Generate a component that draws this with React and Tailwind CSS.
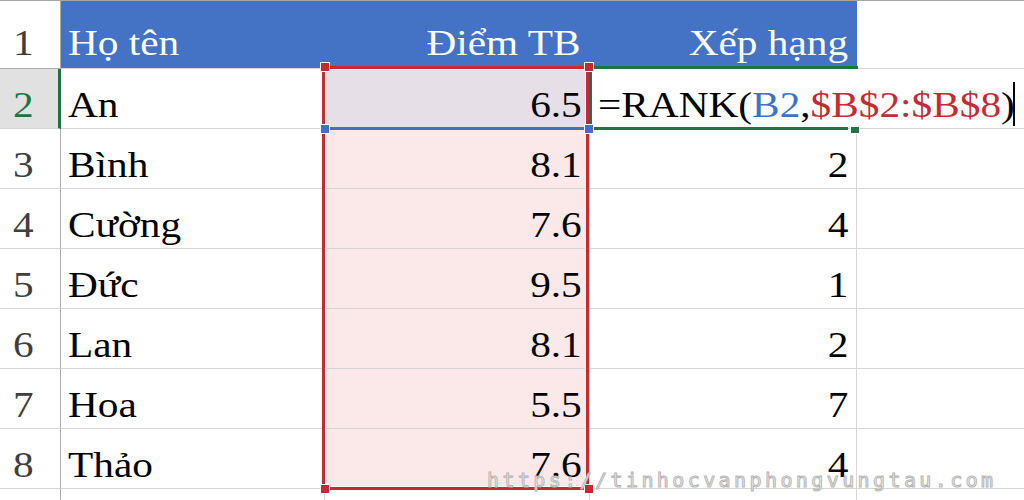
import React from "react";

const rows = [
  { n: 2, name: "An", score: "6.5", rank: "" },
  { n: 3, name: "Bình", score: "8.1", rank: "2" },
  { n: 4, name: "Cường", score: "7.6", rank: "4" },
  { n: 5, name: "Đức", score: "9.5", rank: "1" },
  { n: 6, name: "Lan", score: "8.1", rank: "2" },
  { n: 7, name: "Hoa", score: "5.5", rank: "7" },
  { n: 8, name: "Thảo", score: "7.6", rank: "4" },
];

// text in the shot is stretched a bit horizontally
function L({ children, className = "" }) {
  return <span className={"inline-block origin-left scale-x-[1.18] " + className}>{children}</span>;
}
function R({ children, className = "" }) {
  return <span className={"inline-block origin-right scale-x-[1.18] " + className}>{children}</span>;
}

function Handle({ className }) {
  return <div className={"absolute w-[10px] h-[10px] border border-white " + className} />;
}

export default function App() {
  return (
    <div
      className="relative w-[1024px] h-[500px] overflow-hidden bg-white text-[35px] leading-[35px] text-black"
      style={{ fontFamily: '"Liberation Serif", "Times New Roman", serif' }}
    >
      {/* header row */}
      <div className="flex h-[69px] border-t border-[#a6a6a6]">
        <div className="w-[61px] shrink-0 border-r border-b border-[#ababab] flex items-end pb-[7px] pl-[13px] text-[#3f3f3f]">
          <L>1</L>
        </div>
        <div className="w-[264px] shrink-0 bg-[#4472c4] border-b border-[#d4d4d4] flex items-end pb-[7px] pl-[7px] text-white">
          <L>Họ tên</L>
        </div>
        <div className="w-[265px] shrink-0 bg-[#4472c4] border-b border-[#d4d4d4] flex items-end justify-end pb-[7px] pr-[9px] text-white">
          <R>Điểm TB</R>
        </div>
        <div className="w-[267px] shrink-0 bg-[#4472c4] border-b border-[#d4d4d4] flex items-end justify-end pb-[7px] pr-[9px] text-white">
          <R>Xếp hạng</R>
        </div>
        <div className="flex-1 border-b border-[#d4d4d4]" />
      </div>

      {rows.map((r) => {
        const active = r.n === 2;
        return (
          <div key={r.n} className="flex h-[60px]">
            <div
              className={
                "w-[61px] shrink-0 border-b border-[#d4d4d4] flex items-end pb-[5px] pl-[13px] " +
                (active
                  ? "bg-[#e1e1e1] border-r-[3px] border-r-[#217346] text-[#217346]"
                  : "border-r border-r-[#ababab] text-[#3f3f3f]")
              }
            >
              <L>{r.n}</L>
            </div>
            <div className="w-[264px] shrink-0 border-r border-b border-[#d4d4d4] flex items-end pb-[5px] pl-[7px]">
              <L>{r.name}</L>
            </div>
            <div
              className={
                "w-[265px] shrink-0 border-r border-b border-[#d4d4d4] flex items-end justify-end pb-[5px] pr-[7px] " +
                (active ? "bg-[#e6dfe7]" : "bg-[#fbe9ea]")
              }
            >
              <R>{r.score}</R>
            </div>
            <div className="w-[267px] shrink-0 border-r border-b border-[#d4d4d4] flex items-end justify-end pb-[5px] pr-[8px]">
              <R>{r.rank}</R>
            </div>
            <div className="flex-1 border-b border-[#d4d4d4]" />
          </div>
        );
      })}

      <div className="flex h-[20px]">
        <div className="w-[61px] shrink-0 border-r border-[#ababab]" />
        <div className="w-[264px] shrink-0 border-r border-[#d4d4d4]" />
        <div className="w-[265px] shrink-0 border-r border-[#d4d4d4]" />
        <div className="w-[267px] shrink-0 border-r border-[#d4d4d4]" />
      </div>

      {/* cell editor on C2 */}
      <div className="absolute left-[591px] top-[69px] w-[433px] h-[59px] bg-white flex items-end pb-[5px] pl-[7px] whitespace-nowrap">
        <L>
          =RANK(<span className="text-[#3e72c6]">B2</span>,<span className="text-[#c42b35]">$B$2:$B$8</span>)
        </L>
      </div>
      <div className="absolute left-[1013px] top-[82px] w-[2px] h-[44px] bg-black" />

      {/* green active cell lines */}
      <div className="absolute left-[589px] top-[66px] w-[269px] h-[3px] bg-[#217346]" />
      <div className="absolute left-[589px] top-[66px] w-[3px] h-[64px] bg-[#217346]" />
      <div className="absolute left-[589px] top-[127px] w-[259px] h-[3px] bg-[#217346]" />
      <div className="absolute left-[850px] top-[126px] w-[10px] h-[8px] bg-[#217346] border border-white" />

      {/* red range B2:B8 */}
      <div className="absolute left-[322px] top-[66px] w-[267px] h-[424px] border-[3px] border-[#c42b35] shadow-[inset_0_0_0_1px_white]" />
      {/* blue ref B2 */}
      <div className="absolute left-[326px] top-[127px] w-[260px] h-[3px] bg-[#3e72c6]" />

      <Handle className="left-[320px] top-[62px] bg-[#c42b35]" />
      <Handle className="left-[584px] top-[62px] bg-[#c42b35]" />
      <Handle className="left-[320px] top-[484px] bg-[#c42b35]" />
      <Handle className="left-[584px] top-[484px] bg-[#c42b35]" />
      <Handle className="left-[320px] top-[124px] bg-[#3e72c6]" />
      <Handle className="left-[584px] top-[124px] bg-[#3e72c6]" />

      {/* watermark */}
      <div
        className="absolute left-[487px] top-[468px] text-[20px] leading-[24px] tracking-[3.4px] text-[#f2f2f2] [-webkit-text-stroke:1px_#b5b5b5]"
        style={{ fontFamily: '"DejaVu Sans Mono", monospace' }}
      >
        https://tinhocvanphongvungtau.com
      </div>
    </div>
  );
}
